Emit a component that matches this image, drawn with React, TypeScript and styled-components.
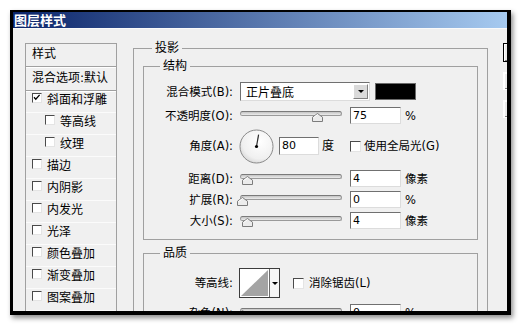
import React from "react";
import styled, { createGlobalStyle } from "styled-components";

const GlobalStyle = createGlobalStyle`
  html, body { margin: 0; padding: 0; background: #ffffff; }
  body {
    font-family: "DejaVu Sans", "Noto Sans CJK SC", sans-serif;
    font-size: 12px;
    color: #000;
  }
  #root { width: 522px; height: 327px; overflow: hidden; }
`;

const Page = styled.div`
  padding: 10px 0 0 10px;
`;

const Window = styled.div`
  position: relative;
  width: 494px;
  height: 299px;
  border-style: solid;
  border-color: #000;
  border-width: 2px 4px 4px 3px;
  background: #f0f0f0;
  box-shadow: 2px 3px 5px rgba(0, 0, 0, 0.45);
  display: flex;
  flex-direction: column;
  overflow: hidden;
`;

const TitleBar = styled.div`
  height: 16px;
  flex-shrink: 0;
  background: linear-gradient(to right, #0a246a 0%, #a6caf0 100%);
  color: #fff;
  font-family: "Noto Sans CJK SC", sans-serif;
  font-weight: 700;
  font-size: 13px;
  line-height: 16px;
  padding-left: 1px;
  white-space: nowrap;
`;

const Body = styled.div`
  flex: 1;
  min-height: 0;
  display: flex;
  align-items: flex-start;
  padding: 14px 0 0 12px;
  border-top: 1px solid #fafafa;
  overflow: hidden;
`;

/* ---------- left styles list ---------- */
const StylePanel = styled.div`
  width: 92px;
  height: 300px;
  flex-shrink: 0;
  box-sizing: border-box;
  border: 1px solid #a0a0a0;
  margin-right: 16px;
`;

const PanelHead = styled.div<{ $h: number; $pb: number }>`
  height: ${(p) => p.$h}px;
  box-sizing: border-box;
  border-bottom: 1px solid #a0a0a0;
  box-shadow: 0 1px 0 #ffffff;
  padding: 0 0 ${(p) => p.$pb}px 6px;
  display: flex;
  align-items: center;
  font-size: 12px;
  line-height: 14px;
  white-space: nowrap;
`;

const StyleItem = styled.div<{ $indent: boolean }>`
  height: 22px;
  box-sizing: border-box;
  border-bottom: 1px solid #fbfbfb;
  padding: 2px 0 0 ${(p) => (p.$indent ? 19 : 6)}px;
  display: flex;
  align-items: flex-start;
  white-space: nowrap;
`;

const ItemText = styled.span`
  margin-left: 5px;
  font-size: 12px;
  line-height: 14px;
`;

const CheckBox = styled.span<{ $size: number; $ml?: number }>`
  width: ${(p) => p.$size}px;
  height: ${(p) => p.$size}px;
  flex-shrink: 0;
  box-sizing: border-box;
  margin-left: ${(p) => p.$ml ?? 0}px;
  background: #ffffff;
  border-top: 1px solid #4a4a4a;
  border-left: 1px solid #4a4a4a;
  border-right: 1px solid #e4e4e4;
  border-bottom: 1px solid #e4e4e4;
  display: flex;
  align-items: flex-start;
  justify-content: flex-start;
`;

/* ---------- main panel ---------- */
const Main = styled.div`
  width: 355px;
  flex-shrink: 0;
  margin-top: -1px;
`;

const Group = styled.fieldset<{ $mt?: number }>`
  margin: ${(p) => p.$mt ?? 0}px 0 0 0;
  padding: 0;
  border: 1px solid #a0a0a0;
  min-width: 0;
`;

const Legend = styled.legend<{ $ml: number }>`
  margin-left: ${(p) => p.$ml}px;
  padding: 0 3px;
  font-size: 12px;
  line-height: 12px;
  white-space: nowrap;
`;

const GroupBody = styled.div<{ $pad: string }>`
  padding: ${(p) => p.$pad};
`;

const Row = styled.div<{ $h: number; $mt?: number }>`
  display: flex;
  align-items: center;
  height: ${(p) => p.$h}px;
  margin-top: ${(p) => p.$mt ?? 0}px;
  white-space: nowrap;
`;

const Label = styled.span`
  width: 89px;
  flex-shrink: 0;
  text-align: right;
  font-size: 11.5px;
  line-height: 14px;
  margin-right: 6px;
`;

const Text = styled.span<{ $ml?: number }>`
  margin-left: ${(p) => p.$ml ?? 0}px;
  font-size: 12px;
  line-height: 14px;
`;

const Select = styled.div`
  width: 130px;
  height: 19px;
  margin-left: 1px;
  box-sizing: border-box;
  background: #fff;
  border-top: 1px solid #707070;
  border-left: 1px solid #707070;
  border-right: 1px solid #dcdcdc;
  border-bottom: 1px solid #dcdcdc;
  display: flex;
  align-items: center;
  justify-content: space-between;
  padding: 0 1px 0 5px;
  font-size: 12px;
`;

const DropButton = styled.div`
  width: 15px;
  height: 15px;
  box-sizing: border-box;
  background: #dadada;
  border-top: 1px solid #ffffff;
  border-left: 1px solid #ffffff;
  border-right: 1px solid #808080;
  border-bottom: 1px solid #808080;
  display: flex;
  align-items: center;
  justify-content: center;
`;

const DownArrow = styled.span`
  width: 0;
  height: 0;
  border-left: 3px solid transparent;
  border-right: 3px solid transparent;
  border-top: 3px solid #000;
`;

const Swatch = styled.div`
  width: 41px;
  height: 17px;
  margin-left: 5px;
  box-sizing: border-box;
  background: #000;
  border: 1px solid #6a6a6a;
`;

const NumBox = styled.div<{ $w: number; $h: number; $ml?: number }>`
  width: ${(p) => p.$w}px;
  height: ${(p) => p.$h}px;
  margin-left: ${(p) => p.$ml ?? 0}px;
  flex-shrink: 0;
  box-sizing: border-box;
  background: #fff;
  border-top: 1px solid #707070;
  border-left: 1px solid #707070;
  border-right: 1px solid #dcdcdc;
  border-bottom: 1px solid #dcdcdc;
  padding-left: 2px;
  font-family: "DejaVu Sans", sans-serif;
  font-size: 11px;
  line-height: ${(p) => p.$h - 2}px;
`;

const Unit = styled.span`
  margin-left: 4px;
  font-size: 11.5px;
  line-height: 14px;
`;

const Slider = styled.div`
  position: relative;
  width: 102px;
  height: 12px;
  margin-left: 1px;
  margin-right: 8px;
  flex-shrink: 0;
`;

const Track = styled.div`
  margin-top: 1px;
  height: 5px;
  box-sizing: border-box;
  border-radius: 3px;
  border: 1px solid #9a9a9a;
  border-top-color: #7a7a7a;
  background: linear-gradient(to bottom, #c4c4c4, #ececec);
`;

const Thumb = styled.svg`
  position: absolute;
  top: 3px;
`;

const Contour = styled.div`
  display: flex;
  width: 41px;
  height: 30px;
  box-sizing: border-box;
  border: 1px solid #3c3c3c;
  flex-shrink: 0;
`;

const ContourArrow = styled.div`
  flex: 1;
  border-left: 1px solid #6a6a6a;
  background: #f6f6f6;
  display: flex;
  align-items: center;
  justify-content: center;
`;

/* ---------- right buttons ---------- */
const ButtonCol = styled.div`
  width: 80px;
  flex-shrink: 0;
  margin-left: 15px;
  display: flex;
  flex-direction: column;
`;

const DlgButton = styled.div<{ $default?: boolean; $h: number; $mt: number }>`
  height: ${(p) => p.$h}px;
  margin-top: ${(p) => p.$mt}px;
  box-sizing: border-box;
  background: #ececec;
  border: 1px solid ${(p) => (p.$default ? "#000" : "#ffffff")};
  box-shadow: inset 1px 1px 0 #ffffff, inset -1px -1px 0 #808080;
  display: flex;
  align-items: center;
  justify-content: center;
  font-size: 12px;
`;

/* ---------- drawings ---------- */
const Tick = () => (
  <svg width="8" height="8" viewBox="0 0 8 8">
    <path d="M1 3.2 L2.8 5.2 L6.6 0.9" fill="none" stroke="#000" strokeWidth="1.3" />
  </svg>
);

const ThumbShape = ({ left }: { left: number }) => (
  <Thumb width="11" height="9" viewBox="0 0 11 9" style={{ left }}>
    <polygon points="0.5,8.5 0.5,4.2 5.5,0.5 10.5,4.2 10.5,8.5" fill="#ececec" stroke="#7c7c7c" />
    <line x1="1.5" y1="4.6" x2="5.5" y2="1.6" stroke="#ffffff" />
  </Thumb>
);

const Dial = () => (
  <svg width="35" height="35" viewBox="0 0 35 35">
    <defs>
      <radialGradient id="dialg" cx="0.6" cy="0.35" r="0.75">
        <stop offset="0" stopColor="#ffffff" />
        <stop offset="0.7" stopColor="#f0f0f0" />
        <stop offset="1" stopColor="#cfcfcf" />
      </radialGradient>
    </defs>
    <circle cx="17.5" cy="17.5" r="16.5" fill="url(#dialg)" stroke="#8a8a8a" />
    <line x1="17.5" y1="17.5" x2="19.6" y2="5.7" stroke="#2a2a2a" strokeWidth="1.2" />
    <circle cx="17.5" cy="17.5" r="1.6" fill="#000" />
  </svg>
);

const ContourPreview = () => (
  <svg width="29" height="28" viewBox="0 0 29 28">
    <rect x="0" y="0" width="29" height="28" fill="#ffffff" />
    <polygon points="1,27 28,1 28,27" fill="#a4a4a4" />
  </svg>
);

/* ---------- data ---------- */
const styleItems: { label: string; checked?: boolean; indent?: boolean }[] = [
  { label: "斜面和浮雕", checked: true },
  { label: "等高线", indent: true },
  { label: "纹理", indent: true },
  { label: "描边" },
  { label: "内阴影" },
  { label: "内发光" },
  { label: "光泽" },
  { label: "颜色叠加" },
  { label: "渐变叠加" },
  { label: "图案叠加" },
  { label: "外发光" },
  { label: "投影" },
];

const sliderRows = [
  { label: "距离(D):", value: "4", unit: "像素", thumb: 2, mt: 7 },
  { label: "扩展(R):", value: "0", unit: "%", thumb: -3, mt: 4 },
  { label: "大小(S):", value: "4", unit: "像素", thumb: 2, mt: 4 },
];

export default function App() {
  return (
    <>
      <GlobalStyle />
      <Page>
        <Window>
          <TitleBar>图层样式</TitleBar>
          <Body>
            <StylePanel>
              <PanelHead $h={23} $pb={3}>样式</PanelHead>
              <PanelHead $h={24} $pb={2}>混合选项:默认</PanelHead>
              {styleItems.map((it) => (
                <StyleItem key={it.label} $indent={!!it.indent}>
                  <CheckBox $size={10}>{it.checked && <Tick />}</CheckBox>
                  <ItemText>{it.label}</ItemText>
                </StyleItem>
              ))}
            </StylePanel>

            <Main>
              <Group>
                <Legend $ml={18}>投影</Legend>
                <GroupBody $pad="0 9px 0 9px">
                  <Group $mt={6}>
                    <Legend $ml={16}>结构</Legend>
                    <GroupBody $pad="10px 0 10px 0">
                      <Row $h={19}>
                        <Label>混合模式(B):</Label>
                        <Select>
                          正片叠底
                          <DropButton>
                            <DownArrow />
                          </DropButton>
                        </Select>
                        <Swatch />
                      </Row>
                      <Row $h={17} $mt={6}>
                        <Label>不透明度(O):</Label>
                        <Slider>
                          <Track />
                          <ThumbShape left={72} />
                        </Slider>
                        <NumBox $w={51} $h={17}>75</NumBox>
                        <Unit>%</Unit>
                      </Row>
                      <Row $h={34} $mt={5}>
                        <Label>角度(A):</Label>
                        <Dial />
                        <NumBox $w={40} $h={18} $ml={5}>80</NumBox>
                        <Text $ml={3}>度</Text>
                        <CheckBox $size={11} $ml={16} />
                        <Text $ml={3} style={{ fontSize: 11.5 }}>使用全局光(G)</Text>
                      </Row>
                      {sliderRows.map((r) => (
                        <Row key={r.label} $h={17} $mt={r.mt}>
                          <Label>{r.label}</Label>
                          <Slider>
                            <Track />
                            <ThumbShape left={r.thumb} />
                          </Slider>
                          <NumBox $w={51} $h={17}>{r.value}</NumBox>
                          <Unit>{r.unit}</Unit>
                        </Row>
                      ))}
                    </GroupBody>
                  </Group>

                  <Group $mt={7}>
                    <Legend $ml={16}>品质</Legend>
                    <GroupBody $pad="9px 0 10px 0">
                      <Row $h={30}>
                        <Label>等高线:</Label>
                        <Contour>
                          <ContourPreview />
                          <ContourArrow>
                            <DownArrow />
                          </ContourArrow>
                        </Contour>
                        <CheckBox $size={11} $ml={13} />
                        <Text $ml={5} style={{ fontSize: 11.5 }}>消除锯齿(L)</Text>
                      </Row>
                      <Row $h={17} $mt={6}>
                        <Label>杂色(N):</Label>
                        <Slider>
                          <Track />
                          <ThumbShape left={-3} />
                        </Slider>
                        <NumBox $w={51} $h={17}>0</NumBox>
                        <Unit>%</Unit>
                      </Row>
                    </GroupBody>
                  </Group>
                </GroupBody>
              </Group>
            </Main>

            <ButtonCol>
              <DlgButton $default $h={19} $mt={0}>确定</DlgButton>
              <DlgButton $h={18} $mt={10}>复位</DlgButton>
              <DlgButton $h={18} $mt={10}>新建样式...</DlgButton>
            </ButtonCol>
          </Body>
        </Window>
      </Page>
    </>
  );
}
